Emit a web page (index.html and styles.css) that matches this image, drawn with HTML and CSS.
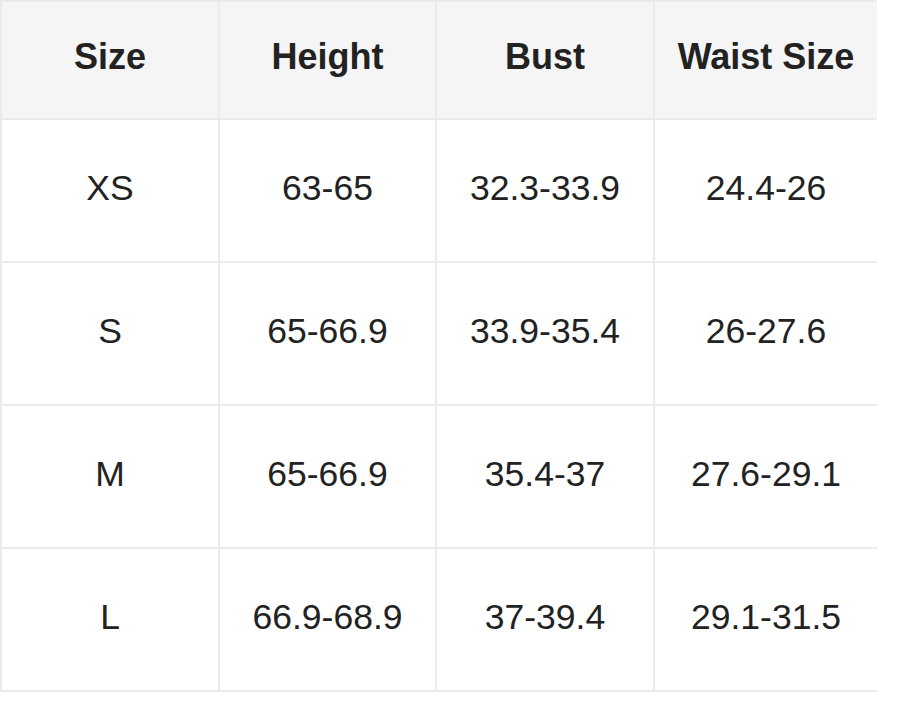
FILE: index.html
```html
<!DOCTYPE html>
<html lang="en">
<head>
<meta charset="utf-8">
<title>Size Chart</title>
<link rel="stylesheet" href="styles.css">
</head>
<body>
<div class="chart">
  <div class="cell head">Size</div>
  <div class="cell head">Height</div>
  <div class="cell head">Bust</div>
  <div class="cell head">Waist Size</div>

  <div class="cell">XS</div>
  <div class="cell">63-65</div>
  <div class="cell">32.3-33.9</div>
  <div class="cell">24.4-26</div>

  <div class="cell">S</div>
  <div class="cell">65-66.9</div>
  <div class="cell">33.9-35.4</div>
  <div class="cell">26-27.6</div>

  <div class="cell">M</div>
  <div class="cell">65-66.9</div>
  <div class="cell">35.4-37</div>
  <div class="cell">27.6-29.1</div>

  <div class="cell">L</div>
  <div class="cell">66.9-68.9</div>
  <div class="cell">37-39.4</div>
  <div class="cell">29.1-31.5</div>
</div>
</body>
</html>
```

FILE: styles.css
```css
html, body {
  margin: 0;
  padding: 0;
  background: #ffffff;
}

body {
  font-family: "Liberation Sans", Arial, sans-serif;
  color: #222222;
}

.chart {
  width: 875px;
  display: grid;
  grid-template-columns: 216px 215px 216px 222px;
  grid-template-rows: 116px 141px 141px 141px 141px;
  gap: 2px;
  padding: 2px 0 2px 2px;
  background: #ebebeb;
}

.cell {
  background: #ffffff;
  display: flex;
  align-items: center;
  justify-content: center;
  font-size: 35.5px;
  padding-bottom: 5px;
  box-sizing: border-box;
}

.cell.head {
  background: #f5f5f5;
  font-weight: 700;
  font-size: 36px;
  padding-bottom: 6px;
}
```
